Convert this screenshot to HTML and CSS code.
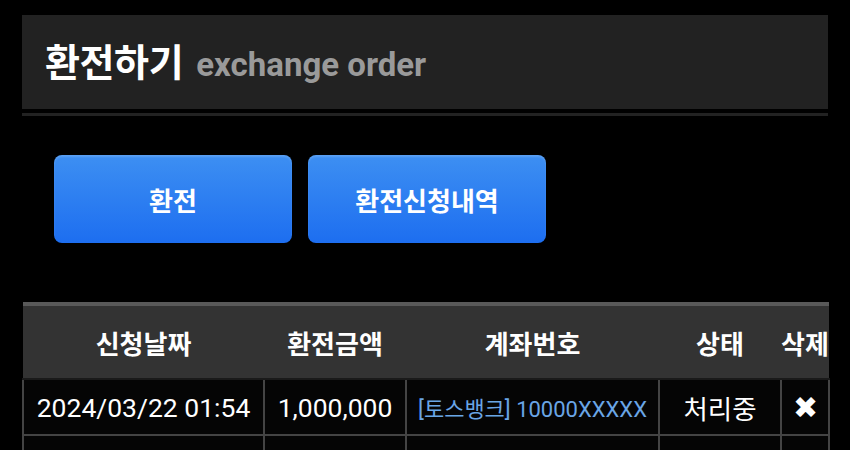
FILE: index.html
```html
<!DOCTYPE html>
<html lang="ko">
<head>
  <meta charset="UTF-8">
  <meta name="viewport" content="width=device-width, initial-scale=1.0">
  <title>환전하기</title>
  <link rel="stylesheet" href="styles.css">
</head>
<body>
  <div class="wrap">
    <div class="page-title">
      <h1>환전하기 <span class="sub">exchange order</span></h1>
    </div>
    <div class="title-line"></div>

    <div class="tabs">
      <button class="tab-btn" type="button">환전</button>
      <button class="tab-btn" type="button">환전신청내역</button>
    </div>

    <table class="list">
      <thead>
        <tr>
          <th class="c-date">신청날짜</th>
          <th class="c-amount">환전금액</th>
          <th class="c-account">계좌번호</th>
          <th class="c-state">상태</th>
          <th class="c-del">삭제</th>
        </tr>
      </thead>
      <tbody>
        <tr>
          <td>2024/03/22 01:54</td>
          <td>1,000,000</td>
          <td class="account">[토스뱅크] 10000XXXXX</td>
          <td>처리중</td>
          <td class="del">&#10006;</td>
        </tr>
        <tr>
          <td>&nbsp;</td>
          <td>&nbsp;</td>
          <td>&nbsp;</td>
          <td>&nbsp;</td>
          <td>&nbsp;</td>
        </tr>
      </tbody>
    </table>
  </div>
</body>
</html>
```

FILE: styles.css
```css
body {
  margin: 0;
  padding: 0;
  background: #000;
  color: #fff;
  font-family: Roboto, "Noto Sans CJK KR", sans-serif;
  overflow: hidden;
}
.wrap {
  margin: 15px 22px 0;
}
.page-title {
  background: #222;
  height: 94px;
  display: flex;
  align-items: center;
  padding: 0 23px 5px;
  box-sizing: border-box;
}
.page-title h1 {
  margin: 0;
  font-size: 38px;
  font-weight: bold;
  color: #fff;
  letter-spacing: -0.4px;
}
.page-title .sub {
  margin-left: 4px;
  font-size: 33px;
  color: #9a9a9a;
  letter-spacing: 0;
}
.title-line {
  height: 3px;
  background: #222;
  margin-top: 4px;
}
.tabs {
  display: flex;
  gap: 16px;
  padding: 39px 0 0 32px;
  height: 88px;
}
.tab-btn {
  width: 238px;
  height: 88px;
  border: none;
  border-radius: 8px;
  background: linear-gradient(#3d8ff2, #1d6ef0);
  box-shadow: inset 0 2px 2px rgba(255,255,255,0.15);
  color: #fff;
  font-family: Roboto, "Noto Sans CJK KR", sans-serif;
  font-size: 26px;
  font-weight: bold;
  cursor: pointer;
}
.list {
  margin-top: 59px;
  width: 806px;
  border-collapse: collapse;
  table-layout: fixed;
}
.list thead tr {
  border-top: 4px solid #595959;
}
.list th {
  background: #333;
  height: 72px;
  font-size: 26px;
  font-weight: bold;
  padding: 0;
  border-bottom: 2px solid #1a1a1a;
}
.c-date { width: 241px; }
.c-amount { width: 142px; }
.c-account { width: 253px; }
.c-state { width: 122px; }
.c-del { width: 48px; }
.list td {
  background: #050505;
  border: 2px solid #444;
  height: 54px;
  padding: 0;
  text-align: center;
  font-size: 26.5px;
  white-space: nowrap;
}
.list td.account {
  color: #6aa6e6;
  font-size: 22px;
}
.list td.del {
  font-size: 30px;
}
```
